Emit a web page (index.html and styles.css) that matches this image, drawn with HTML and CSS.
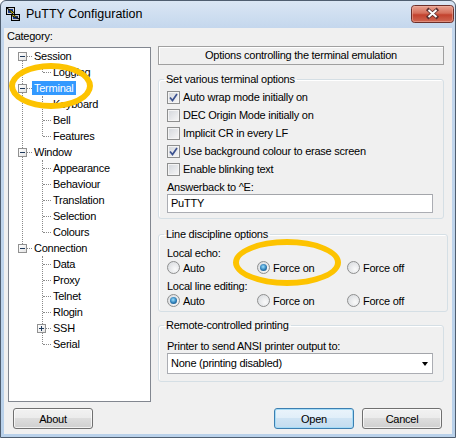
FILE: index.html
```html
<!DOCTYPE html>
<html lang="en">
<head>
    <meta charset="UTF-8">
    <meta name="viewport" content="width=device-width, initial-scale=1.0">
    <title>PuTTY Configuration</title>
    <link rel="stylesheet" href="styles.css">
</head>
<body>

    <div class="window">
        <div class="titlebar">
            <svg class="app-icon" width="16" height="16" viewBox="0 0 16 16">
                <rect x="1.5" y="1.5" width="8" height="7" fill="#d4d4d4" stroke="#000"/>
                <rect x="3" y="3" width="5" height="4" fill="#1a3c8c"/>
                <rect x="6.5" y="8.5" width="8" height="6" fill="#c8c8c8" stroke="#000"/>
                <rect x="8" y="10" width="5" height="3" fill="#1a3c8c"/>
                <polygon points="2,2 9,6.5 7,7.5 14,13 6.5,9.5 8,8.5" fill="#ffe800" stroke="#000" stroke-width="0.8" stroke-linejoin="round"/>
            </svg>
            <span class="title">PuTTY Configuration</span>
            <svg class="close-btn" width="43" height="18" viewBox="0 0 43 18">
                <defs>
                    <linearGradient id="closeFill" x1="0" y1="0" x2="0" y2="1">
                        <stop offset="0" stop-color="#eaa594"/>
                        <stop offset="0.45" stop-color="#d5705c"/>
                        <stop offset="0.55" stop-color="#c3422e"/>
                        <stop offset="1" stop-color="#d06a55"/>
                    </linearGradient>
                </defs>
                <rect x="0.5" y="0.5" width="42" height="17" rx="3" fill="url(#closeFill)" stroke="#6b2f2a"/>
                <rect x="1.5" y="1.5" width="40" height="15" rx="2" fill="none" stroke="#f0b8aa" stroke-opacity="0.5"/>
                <path d="M17.5 5 L25.5 12 M25.5 5 L17.5 12" stroke="#5a3030" stroke-width="3.6" stroke-linecap="square"/>
                <path d="M17.5 5 L25.5 12 M25.5 5 L17.5 12" stroke="#fff" stroke-width="2"/>
            </svg>
        </div>

        <div class="client">
            <div class="main">
                <div class="category">
                    <div class="category-label">Category:</div>
                    <div class="tree">
                        <div class="node">
                            <div class="row root"><span class="exp minus"></span><span class="text">Session</span></div>
                            <div class="children">
                                <div class="row child"><span class="spacer"></span><span class="text">Logging</span></div>
                            </div>
                        </div>
                        <div class="node">
                            <div class="row root selected"><span class="exp minus"></span><span class="text">Terminal</span></div>
                            <div class="children">
                                <div class="row child"><span class="spacer"></span><span class="text">Keyboard</span></div>
                                <div class="row child"><span class="spacer"></span><span class="text">Bell</span></div>
                                <div class="row child"><span class="spacer"></span><span class="text">Features</span></div>
                            </div>
                        </div>
                        <div class="node">
                            <div class="row root"><span class="exp minus"></span><span class="text">Window</span></div>
                            <div class="children">
                                <div class="row child"><span class="spacer"></span><span class="text">Appearance</span></div>
                                <div class="row child"><span class="spacer"></span><span class="text">Behaviour</span></div>
                                <div class="row child"><span class="spacer"></span><span class="text">Translation</span></div>
                                <div class="row child"><span class="spacer"></span><span class="text">Selection</span></div>
                                <div class="row child"><span class="spacer"></span><span class="text">Colours</span></div>
                            </div>
                        </div>
                        <div class="node last">
                            <div class="row root"><span class="exp minus"></span><span class="text">Connection</span></div>
                            <div class="children">
                                <div class="row child"><span class="spacer"></span><span class="text">Data</span></div>
                                <div class="row child"><span class="spacer"></span><span class="text">Proxy</span></div>
                                <div class="row child"><span class="spacer"></span><span class="text">Telnet</span></div>
                                <div class="row child"><span class="spacer"></span><span class="text">Rlogin</span></div>
                                <div class="row child"><span class="exp plus"></span><span class="text">SSH</span></div>
                                <div class="row child"><span class="spacer"></span><span class="text">Serial</span></div>
                            </div>
                        </div>
                    </div>
                </div>

                <div class="panel">
                    <div class="panel-header">Options controlling the terminal emulation</div>

                    <fieldset class="group group-terminal">
                        <legend>Set various terminal options</legend>
                        <div class="checks">
                            <div class="opt"><span class="box checked"><svg width="11" height="11" viewBox="0 0 11 11"><path d="M2 5.5 L4.5 8.5 L9 2" fill="none" stroke="#3c5290" stroke-width="1.7"/></svg></span>Auto wrap mode initially on</div>
                            <div class="opt"><span class="box"></span>DEC Origin Mode initially on</div>
                            <div class="opt"><span class="box"></span>Implicit CR in every LF</div>
                            <div class="opt"><span class="box checked"><svg width="11" height="11" viewBox="0 0 11 11"><path d="M2 5.5 L4.5 8.5 L9 2" fill="none" stroke="#3c5290" stroke-width="1.7"/></svg></span>Use background colour to erase screen</div>
                            <div class="opt"><span class="box"></span>Enable blinking text</div>
                        </div>
                        <div class="field-label">Answerback to ^E:</div>
                        <div class="edit">PuTTY</div>
                    </fieldset>

                    <fieldset class="group group-line">
                        <legend>Line discipline options</legend>
                        <div class="field-label first">Local echo:</div>
                        <div class="radios">
                            <div class="radio-opt"><span class="radio"></span>Auto</div>
                            <div class="radio-opt"><span class="radio on"></span>Force on</div>
                            <div class="radio-opt"><span class="radio"></span>Force off</div>
                        </div>
                        <div class="field-label spaced">Local line editing:</div>
                        <div class="radios">
                            <div class="radio-opt"><span class="radio on"></span>Auto</div>
                            <div class="radio-opt"><span class="radio"></span>Force on</div>
                            <div class="radio-opt"><span class="radio"></span>Force off</div>
                        </div>
                    </fieldset>

                    <fieldset class="group group-print">
                        <legend>Remote-controlled printing</legend>
                        <div class="field-label first">Printer to send ANSI printer output to:</div>
                        <div class="combo">
                            <span>None (printing disabled)</span>
                            <span class="arrow"></span>
                        </div>
                    </fieldset>
                </div>
            </div>

            <div class="buttons">
                <button class="btn">About</button>
                <button class="btn default push-right">Open</button>
                <button class="btn">Cancel</button>
            </div>
        </div>

        <div class="mark mark-terminal"></div>
        <div class="mark mark-echo"></div>
    </div>

</body>
</html>
```

FILE: styles.css
```css
body {
    margin: 0;
    background-color: #ffffff;
    font-family: "Liberation Sans", Arial, sans-serif;
    font-size: 11px;
    letter-spacing: -0.25px;
    color: #000000;
}
.window {
    position: relative;
    width: 456px;
    height: 438px;
    box-sizing: border-box;
    border: 1px solid #4f5e70;
    border-radius: 6px 6px 0 0;
    background: linear-gradient(#dae6f4, #c4d7ed 27px, #b9d1ea);
    display: flex;
    flex-direction: column;
}
.titlebar {
    height: 27px;
    display: flex;
    align-items: flex-start;
    padding: 0 1px 0 4px;
}
.app-icon {
    margin-top: 5px;
}
.title {
    margin: 6px 0 0 5px;
    font-size: 12.5px;
    letter-spacing: 0;
    line-height: 15px;
}
.close-btn {
    display: block;
    margin: 4px 0 0 auto;
    flex-shrink: 0;
}

/* client area */
.client {
    flex: 1;
    margin: 0 3px 3px 3px;
    background-color: #f0f0f0;
    padding: 1px 0 5px 0;
    display: flex;
    flex-direction: column;
}
.main {
    display: flex;
    gap: 7px;
    padding: 0 8px 0 4px;
}
.category-label {
    line-height: 14px;
    margin: 0 0 4px -1px;
}

/* tree */
.tree {
    width: 143px;
    height: 355px;
    box-sizing: border-box;
    background-color: #ffffff;
    border: 1px solid #828790;
}
.node {
    position: relative;
}
.node::before {
    content: "";
    position: absolute;
    left: 13px;
    top: 8px;
    bottom: -8px;
    border-left: 1px dotted #8a8a8a;
}
.node.last::before {
    display: none;
}
.children {
    position: relative;
}
.children::before {
    content: "";
    position: absolute;
    left: 33px;
    top: 0;
    bottom: 8px;
    border-left: 1px dotted #8a8a8a;
}
.row {
    position: relative;
    height: 16px;
    display: flex;
    align-items: center;
}
.row::after {
    content: "";
    position: absolute;
    top: 8px;
    border-top: 1px dotted #8a8a8a;
}
.root {
    padding-left: 9px;
}
.root::after {
    left: 18px;
    width: 5px;
}
.child {
    padding-left: 28px;
}
.child::after {
    left: 34px;
    width: 8px;
}
.exp, .spacer {
    width: 9px;
    height: 9px;
    margin-right: 5px;
    box-sizing: border-box;
    flex-shrink: 0;
}
.exp {
    position: relative;
    z-index: 1;
    border: 1px solid #919191;
    background: linear-gradient(135deg, #ffffff, #e4e4e4);
}
.exp::before {
    content: "";
    position: absolute;
    left: 1px;
    top: 3px;
    width: 5px;
    height: 1px;
    background-color: #1e395b;
}
.exp.plus::after {
    content: "";
    position: absolute;
    left: 3px;
    top: 1px;
    width: 1px;
    height: 5px;
    background-color: #1e395b;
}
.text {
    line-height: 14px;
    padding: 0 2px;
    white-space: nowrap;
}
.selected .text {
    background-color: #3399ff;
    color: #ffffff;
}

/* right panel */
.panel {
    width: 286px;
    margin-top: 17px;
}
.panel-header {
    height: 19px;
    box-sizing: border-box;
    border: 1px solid #a0a0a0;
    box-shadow: inset 1px 1px 0 #ffffff;
    text-align: center;
    line-height: 17px;
}
.group {
    margin: 0;
    padding: 0 10px 0 8px;
    border: 1px solid #d5dfe5;
    border-radius: 3px;
    box-shadow: inset 1px 1px 0 #ffffff;
}
.group legend {
    padding: 0 2px;
    margin-left: -3px;
    line-height: 12px;
}
.group-terminal {
    margin-top: 8px;
    padding-bottom: 5px;
}
.group-line {
    margin-top: 9px;
    padding-bottom: 3px;
}
.group-print {
    margin-top: 7px;
    padding-bottom: 7px;
}
.checks {
    padding-top: 3px;
}
.opt {
    height: 18px;
    display: flex;
    align-items: center;
}
.box {
    width: 13px;
    height: 13px;
    box-sizing: border-box;
    margin-right: 3px;
    border: 1px solid #8e8f8f;
    background: linear-gradient(135deg, #d2d6db, #f7f7f7);
    box-shadow: inset 0 0 0 1px #f4f4f4;
    display: flex;
    align-items: center;
    justify-content: center;
}
.field-label {
    line-height: 14px;
    margin-top: 2px;
}
.field-label.first {
    margin-top: 6px;
}
.group-print .field-label.first {
    margin-top: 8px;
}
.field-label.spaced {
    margin-top: 4px;
}
.edit, .combo {
    height: 19px;
    box-sizing: border-box;
    border: 1px solid #abadb3;
    border-top-color: #a3a5aa;
    background-color: #ffffff;
    padding-left: 3px;
    line-height: 17px;
}
.combo {
    height: 21px;
    line-height: 19px;
    display: flex;
    justify-content: space-between;
    align-items: center;
    padding-right: 4px;
}
.arrow {
    width: 0;
    height: 0;
    border-left: 3.5px solid transparent;
    border-right: 3.5px solid transparent;
    border-top: 4px solid #000000;
}
.radios {
    height: 15px;
    display: flex;
    align-items: center;
}
.radio-opt {
    width: 90px;
    display: flex;
    align-items: center;
}
.radio {
    position: relative;
    width: 13px;
    height: 13px;
    box-sizing: border-box;
    margin-right: 3px;
    border: 1px solid #8e8f8f;
    border-radius: 50%;
    background: radial-gradient(circle at 65% 65%, #fafafa, #d4d7db);
}
.radio.on::after {
    content: "";
    position: absolute;
    left: 2px;
    top: 2px;
    width: 7px;
    height: 7px;
    border-radius: 50%;
    background: radial-gradient(circle at 45% 40%, #9be0ff, #2b7bb5 55%, #123f66);
}

/* bottom buttons */
.buttons {
    margin-top: 6px;
    display: flex;
    gap: 8px;
    padding: 0 10px 0 9px;
}
.btn {
    width: 80px;
    height: 21px;
    padding: 0;
    font-family: "Liberation Sans", Arial, sans-serif;
    font-size: 11px;
    letter-spacing: -0.25px;
    color: #000000;
    border: 1px solid #707070;
    border-radius: 3px;
    background: linear-gradient(#f2f2f2, #ebebeb 50%, #dddddd 50%, #cfcfcf);
    box-shadow: inset 0 0 0 1px rgba(255, 255, 255, 0.7);
}
.btn.default {
    border-color: #3c7fb1;
    background: linear-gradient(#eaf4fb, #e0eef9 50%, #cfe4f4 50%, #c3dcef);
    box-shadow: inset 0 0 0 1px #a6dcf7;
}
.push-right {
    margin-left: auto;
}

/* yellow annotation rings */
.mark {
    position: absolute;
    box-sizing: border-box;
    border: 6px solid #fdc300;
    border-radius: 50%;
}
.mark-terminal {
    left: 8px;
    top: 62px;
    width: 84px;
    height: 46px;
}
.mark-echo {
    left: 232px;
    top: 238px;
    width: 108px;
    height: 47px;
}
```
